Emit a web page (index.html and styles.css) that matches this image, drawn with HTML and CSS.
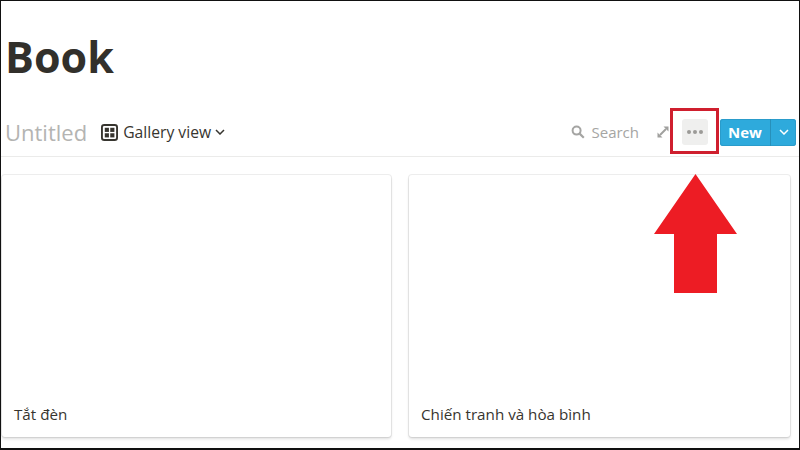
FILE: index.html
```html
<!DOCTYPE html>
<html lang="vi">
<head>
  <meta charset="UTF-8" />
  <title>Book</title>
  <link rel="stylesheet" href="styles.css">
</head>
<body>
  <div class="frame">
    <h1>Book</h1>

    <div class="toolbar">
      <span class="db-name">Untitled</span>
      <span class="view">
        <svg class="view-icon" width="17" height="17" viewBox="0 0 18 18">
          <rect x="1" y="1" width="16" height="16" rx="2.5" fill="none" stroke="#37352f" stroke-width="2"/>
          <rect x="4" y="4" width="4.4" height="4.4" fill="#37352f"/>
          <rect x="9.8" y="4" width="4.4" height="4.4" fill="#37352f"/>
          <rect x="4" y="9.8" width="4.4" height="4.4" fill="#37352f"/>
          <rect x="9.8" y="9.8" width="4.4" height="4.4" fill="#37352f"/>
        </svg>
        Gallery view
        <svg class="caret" width="10" height="6" viewBox="0 0 10 6">
          <path d="M1 1l4 4 4-4" fill="none" stroke="#37352f" stroke-width="1.5"/>
        </svg>
      </span>

      <div class="actions">
        <span class="search">
          <svg width="14" height="14" viewBox="0 0 14 14">
            <circle cx="5.6" cy="5.6" r="4" fill="none" stroke="#a5a5a3" stroke-width="2"/>
            <path d="M8.6 8.6l4.2 4.2" stroke="#a5a5a3" stroke-width="2.2"/>
          </svg>
          Search
        </span>
        <svg class="expand" width="12" height="12" viewBox="0 0 12 12">
          <path d="M6.5 0.5h5V5.5zM0.5 6.5V11.5H5.5z" fill="#a0a09e"/>
          <path d="M3 9l6-6" stroke="#a0a09e" stroke-width="2"/>
        </svg>
        <span class="more"><i></i><i></i><i></i></span>
        <span class="new-btn">
          <span class="new-label">New</span>
          <span class="new-caret">
            <svg width="10" height="6" viewBox="0 0 10 6">
              <path d="M1 1l4 4 4-4" fill="none" stroke="#fff" stroke-width="1.5"/>
            </svg>
          </span>
        </span>
      </div>
    </div>

    <div class="gallery">
      <div class="card"><span class="card-title">Tắt đèn</span></div>
      <div class="card"><span class="card-title">Chiến tranh và hòa bình</span></div>
    </div>

    <div class="highlight"></div>
    <svg class="arrow" width="84" height="120" viewBox="0 0 84 120">
      <path d="M41.5 0L83 60H63V119H20V60H0z" fill="#ed1c24"/>
    </svg>
  </div>
</body>
</html>
```

FILE: styles.css
```css
* {
  box-sizing: border-box;
}
html, body {
  margin: 0;
  padding: 0;
}
body {
  font-family: "Open Sans", "Noto Sans", sans-serif;
  color: #37352f;
  background: #fff;
}
.frame {
  position: relative;
  width: 800px;
  height: 450px;
  overflow: hidden;
  border-top: 1px solid #111;
  border-left: 1px solid #111;
  border-right: 1px solid #111;
  border-bottom: 2px solid #111;
  background: #fff;
}
h1 {
  margin: 0;
  padding: 26px 0 0 4px;
  height: 107px;
  font-size: 43px;
  line-height: 60px;
  font-weight: 700;
  color: #32302b;
}
.toolbar {
  display: flex;
  align-items: center;
  height: 49px;
  padding: 0 3px 0 4px;
  border-bottom: 1px solid #ebebea;
}
.db-name {
  font-size: 22px;
  font-weight: 500;
  color: #b4b4b2;
  margin-right: 14px;
}
.view {
  display: flex;
  align-items: center;
  font-size: 15.7px;
  font-weight: 500;
}
.view-icon {
  margin-right: 5px;
}
.caret {
  margin-left: 4px;
}
.actions {
  display: flex;
  align-items: center;
  margin-left: auto;
}
.search {
  display: flex;
  align-items: center;
  gap: 7px;
  font-size: 15px;
  color: #a5a5a3;
}
.expand {
  margin-left: 18px;
}
.more {
  display: flex;
  align-items: center;
  justify-content: center;
  gap: 2px;
  width: 26px;
  height: 26px;
  margin-left: 13px;
  border-radius: 3px;
  background: #efefee;
}
.more i {
  width: 4px;
  height: 4px;
  border-radius: 50%;
  background: #9b9a97;
}
.new-btn {
  display: flex;
  height: 27px;
  margin-left: 12px;
  border-radius: 3px;
  background: #2eaadc;
  color: #fff;
  box-shadow: inset 0 0 0 1px #2a9ccb;
}
.new-label {
  width: 50px;
  text-align: center;
  font-size: 15px;
  font-weight: 700;
  line-height: 27px;
}
.new-caret {
  display: flex;
  align-items: center;
  justify-content: center;
  width: 26px;
  border-left: 1px solid #2790ba;
}
.gallery {
  display: grid;
  grid-template-columns: 389px 381px;
  gap: 18px;
  padding: 18px 0 0 1px;
}
.card {
  display: flex;
  align-items: flex-end;
  height: 262px;
  padding: 0 12px 13px;
  border-radius: 3px;
  background: #fff;
  box-shadow: 0 0 0 1px rgba(15, 15, 15, 0.07), 0 2px 3px rgba(15, 15, 15, 0.14);
}
.card-title {
  font-size: 15.2px;
  font-weight: 500;
  line-height: 20px;
}
.highlight {
  position: absolute;
  left: 669px;
  top: 107px;
  width: 49px;
  height: 46px;
  border: 3px solid #cf1f2e;
}
.arrow {
  position: absolute;
  left: 653px;
  top: 173px;
}
```
